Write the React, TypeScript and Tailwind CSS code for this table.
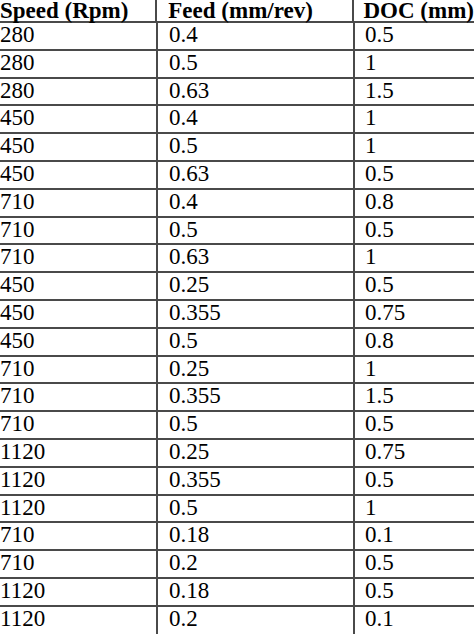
const rows: [string, string, string][] = [
  ['280', '0.4', '0.5'],
  ['280', '0.5', '1'],
  ['280', '0.63', '1.5'],
  ['450', '0.4', '1'],
  ['450', '0.5', '1'],
  ['450', '0.63', '0.5'],
  ['710', '0.4', '0.8'],
  ['710', '0.5', '0.5'],
  ['710', '0.63', '1'],
  ['450', '0.25', '0.5'],
  ['450', '0.355', '0.75'],
  ['450', '0.5', '0.8'],
  ['710', '0.25', '1'],
  ['710', '0.355', '1.5'],
  ['710', '0.5', '0.5'],
  ['1120', '0.25', '0.75'],
  ['1120', '0.355', '0.5'],
  ['1120', '0.5', '1'],
  ['710', '0.18', '0.1'],
  ['710', '0.2', '0.5'],
  ['1120', '0.18', '0.5'],
  ['1120', '0.2', '0.1'],
];

export default function App() {
  return (
    <div className="w-[474px] h-[634px] overflow-hidden bg-white text-black font-['Liberation_Serif',serif] text-[23px]">
      {/* Header */}
      <div className="flex h-[23px] leading-[21px] border-b-2 border-[#4a4a4a] font-bold">
        <div className="w-[158px] border-r-2 border-[#4a4a4a] whitespace-nowrap">Speed (Rpm)</div>
        <div className="w-[197px] border-r-2 border-[#4a4a4a] pl-[11px] whitespace-nowrap">Feed (mm/rev)</div>
        <div className="flex-1 pl-[10px] whitespace-nowrap">DOC (mm)</div>
      </div>

      {/* Body */}
      {rows.map(([speed, feed, doc], i) => (
        <div
          key={i}
          className={`flex h-[27.8px] leading-[24px] ${i < rows.length - 1 ? 'border-b-2 border-[#4a4a4a]' : ''}`}
        >
          <div className="w-[158px] border-r-2 border-[#4a4a4a]">{speed}</div>
          <div className="w-[197px] border-r-2 border-[#4a4a4a] pl-[11px]">{feed}</div>
          <div className="flex-1 pl-[10px]">{doc}</div>
        </div>
      ))}
    </div>
  );
}
